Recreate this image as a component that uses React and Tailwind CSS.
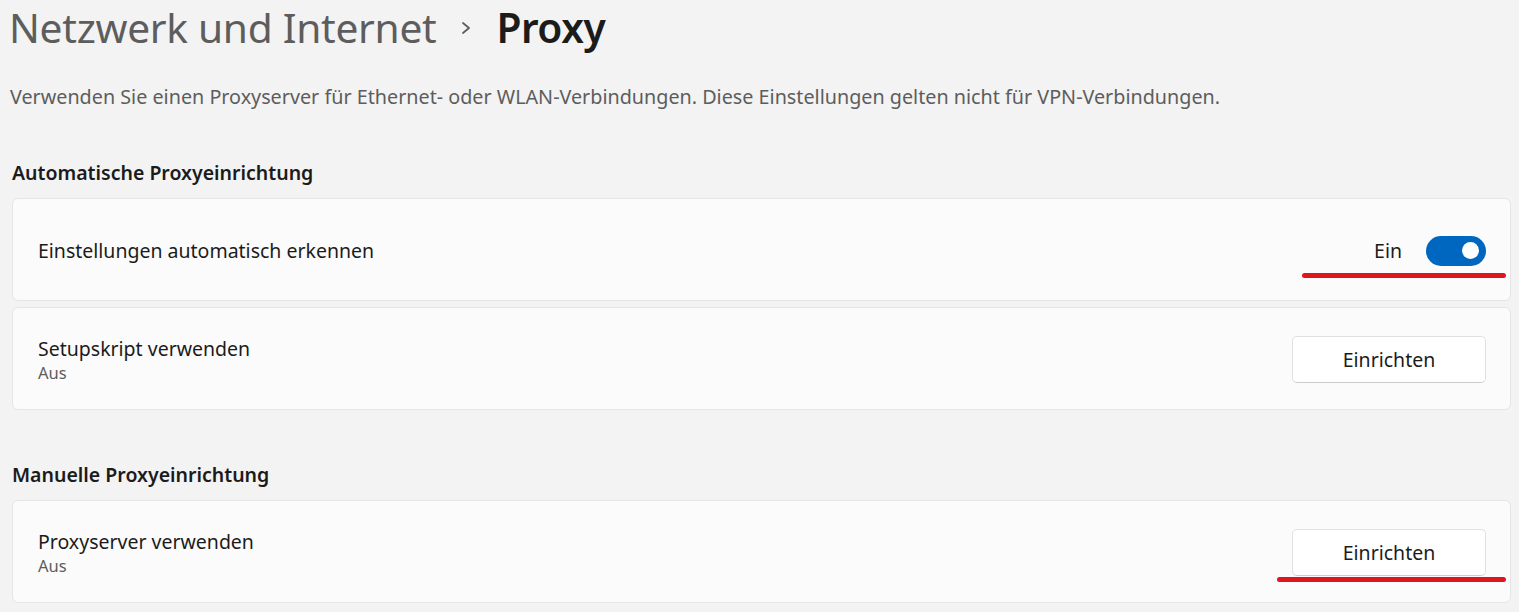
export default function App() {
  const font = { fontFamily: '"Noto Sans", "Open Sans", sans-serif' }

  const card =
    'h-[103px] rounded-[6px] border border-[#e5e5e5] bg-[#fbfbfb] flex items-center justify-between pl-[25px] pr-[24px] pt-[2px]'

  const btn =
    'w-[194px] h-[47px] rounded-[5px] border border-[#e0e0e0] border-b-[#cccccc] bg-white text-[19.5px] text-[#1b1b1b] flex items-center justify-center'

  return (
    <div
      className="w-[1519px] h-[612px] overflow-hidden bg-[#f3f3f3] text-[#1b1b1b] pl-[12px] pr-[8px]"
      style={font}
    >
      <div className="h-[54px] flex items-center gap-[24px] -ml-[3px]">
        <h1 className="text-[40.7px] leading-none text-[#5d5d5d] font-normal tracking-[-0.3px]">
          Netzwerk und Internet
        </h1>
        <svg width="12" height="16" viewBox="0 0 12 16" className="mt-[2px]">
          <path d="M3 3 L9 8 L3 13" fill="none" stroke="#5d5d5d" strokeWidth="1.8" strokeLinecap="round" strokeLinejoin="round" />
        </svg>
        <h1 className="text-[40.7px] leading-none font-semibold text-[#1b1b1b] tracking-[-0.5px]">Proxy</h1>
      </div>

      <p className="mt-[30px] -ml-[2px] text-[19.75px] leading-[26px] text-[#5d5d5d]">
        Verwenden Sie einen Proxyserver für Ethernet- oder WLAN-Verbindungen. Diese Einstellungen gelten nicht für VPN-Verbindungen.
      </p>

      <h2 className="mt-[50px] text-[19.5px] leading-[26px] font-semibold">Automatische Proxyeinrichtung</h2>

      <div className="mt-[12px] flex flex-col gap-[6px]">
        <div className={card}>
          <span className="text-[19.5px]">Einstellungen automatisch erkennen</span>
          <div className="relative flex items-center gap-[24px]">
            <span className="text-[19.5px]">Ein</span>
            <div className="w-[60px] h-[30px] rounded-full bg-[#0067c0] flex items-center justify-end pr-[7px]">
              <div className="w-[17px] h-[17px] rounded-full bg-white" />
            </div>
            <div className="absolute left-[-72px] right-[-20px] top-[37px] h-[5px] rounded-full bg-[#e0161f]" />
          </div>
        </div>

        <div className={card}>
          <div className="flex flex-col">
            <span className="text-[19.5px] leading-[26px]">Setupskript verwenden</span>
            <span className="text-[16.5px] leading-[22px] text-[#5d5d5d]">Aus</span>
          </div>
          <div className={btn}>Einrichten</div>
        </div>
      </div>

      <h2 className="mt-[52px] text-[19.5px] leading-[26px] font-semibold">Manuelle Proxyeinrichtung</h2>

      <div className="mt-[12px]">
        <div className={card}>
          <div className="flex flex-col">
            <span className="text-[19.5px] leading-[26px]">Proxyserver verwenden</span>
            <span className="text-[16.5px] leading-[22px] text-[#5d5d5d]">Aus</span>
          </div>
          <div className="relative">
            <div className={btn}>Einrichten</div>
            <div className="absolute left-[-15px] right-[-20px] top-[48px] h-[5px] rounded-full bg-[#e0161f]" />
          </div>
        </div>
      </div>
    </div>
  )
}
